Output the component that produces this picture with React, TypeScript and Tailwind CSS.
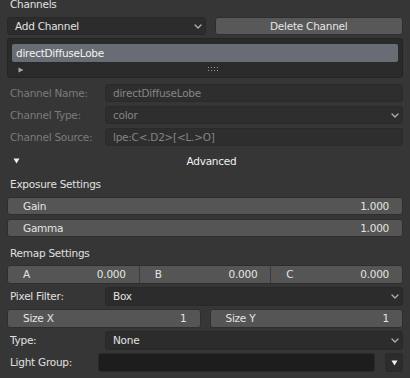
import React from "react";

const Chevron = () => (
  <svg width="8" height="5" viewBox="0 0 8 5" className="shrink-0">
    <path d="M1 1l3 3 3-3" fill="none" stroke="#b0b0b0" strokeWidth="1.3" strokeLinecap="round" strokeLinejoin="round" />
  </svg>
);

const DownTri = ({ color = "#f0f0f0" }: { color?: string }) => (
  <svg width="7" height="6" viewBox="0 0 7 6" className="shrink-0">
    <path d="M0.5 0.5h6L3.5 5.5z" fill={color} />
  </svg>
);

function Dropdown({ text, className = "" }: { text: string; className?: string }) {
  return (
    <div className={`flex items-center justify-between rounded-[3px] bg-[#2c2c2c] border border-[#282828] pl-[7px] pr-[3px] text-[#e2e2e2] ${className}`}>
      <span>{text}</span>
      <Chevron />
    </div>
  );
}

function Slider({ label, value, className = "" }: { label: string; value: string; className?: string }) {
  return (
    <div className={`flex items-center justify-between rounded-[3px] bg-[#555555] border border-[#2e2e2e] pl-[15px] pr-[13px] text-[#e4e4e4] ${className}`}>
      <span>{label}</span>
      <span>{value}</span>
    </div>
  );
}

function DisabledRow({ label, value, menu }: { label: string; value: string; menu?: boolean }) {
  return (
    <div className="flex h-[18px] items-center">
      <span className="w-[98px] shrink-0 pl-[3px] text-[#7b7b7b]">{label}</span>
      <div className="flex h-full flex-1 items-center justify-between rounded-[3px] bg-[#2e2e2e] border border-[#2a2a2a] pl-[7px] pr-[3px] text-[#858585]">
        <span>{value}</span>
        {menu && <Chevron />}
      </div>
    </div>
  );
}

function LabeledDropdown({ label, value }: { label: string; value: string }) {
  return (
    <div className="flex h-[19px] items-center">
      <span className="w-[98px] shrink-0 pl-[3px] text-[#e0e0e0]">{label}</span>
      <Dropdown text={value} className="h-full flex-1" />
    </div>
  );
}

export default function App() {
  return (
    <div className="flex h-[378px] w-[410px] flex-col overflow-hidden bg-[#363636] px-[7px] font-['DejaVu_Sans',sans-serif] text-[10.5px] leading-none tracking-[-0.25px]">
      {/* Channels header */}
      <div className="-mt-[3px] flex h-[14px] items-center pl-[3px] text-[#e0e0e0]">Channels</div>

      <div className="mt-[6px] flex h-[18px] gap-[9px]">
        <Dropdown text="Add Channel" className="flex-1" />
        <div className="flex flex-1 items-center justify-center rounded-[3px] bg-[#585858] border border-[#2e2e2e] text-[#e6e6e6]">
          Delete Channel
        </div>
      </div>

      {/* Channel list */}
      <div className="mt-[3px] flex h-[40px] flex-col rounded-[3px] border border-[#242424] bg-[#2a2a2a] px-[4px] pt-[5px]">
        <div className="flex h-[18px] items-center rounded-[2px] bg-[#686d75] pl-[4px] text-[#f2f2f2]">directDiffuseLobe</div>
        <div className="relative flex flex-1 items-center">
          <svg width="6" height="6" viewBox="0 0 6 6" className="ml-[6px]">
            <path d="M0.5 0.5L5.5 3L0.5 5.5z" fill="#a8a8a8" />
          </svg>
          <svg width="12" height="4" viewBox="0 0 12 4" className="absolute left-[196px] top-[5px]">
            {[0, 3, 6, 9].map((x) => (
              <g key={x} fill="#9a9a9a">
                <rect x={x} y={0} width="1" height="1" />
                <rect x={x} y={3} width="1" height="1" />
              </g>
            ))}
          </svg>
        </div>
      </div>

      <div className="mt-[6px] flex flex-col gap-[4px]">
        <DisabledRow label="Channel Name:" value="directDiffuseLobe" />
        <DisabledRow label="Channel Type:" value="color" menu />
        <DisabledRow label="Channel Source:" value="lpe:C<.D2>[<L.>O]" />
      </div>

      {/* Advanced */}
      <div className="mt-[6px] flex h-[18px] items-center pl-[6px] text-[#f0f0f0]">
        <DownTri />
        <span className="flex-1 text-center">Advanced</span>
      </div>

      <div className="mt-[5px] flex h-[18px] items-center pl-[3px] text-[#e0e0e0]">Exposure Settings</div>
      <Slider label="Gain" value="1.000" className="mt-[4px] h-[18px]" />
      <Slider label="Gamma" value="1.000" className="mt-[4px] h-[18px]" />

      <div className="mt-[7px] flex h-[18px] items-center pl-[3px] text-[#e0e0e0]">Remap Settings</div>
      <div className="mt-[3px] flex h-[19px] rounded-[3px] border border-[#2e2e2e] bg-[#555555] text-[#e4e4e4]">
        {["A", "B", "C"].map((k, i) => (
          <div
            key={k}
            className={`flex flex-1 items-center justify-between pl-[15px] pr-[13px] ${i > 0 ? "border-l border-[#3c3c3c]" : ""}`}
          >
            <span>{k}</span>
            <span>0.000</span>
          </div>
        ))}
      </div>

      <div className="mt-[3px]">
        <LabeledDropdown label="Pixel Filter:" value="Box" />
      </div>

      <div className="mt-[3px] flex h-[19px] gap-[9px]">
        <Slider label="Size X" value="1" className="flex-1" />
        <Slider label="Size Y" value="1" className="flex-1" />
      </div>

      <div className="mt-[3px]">
        <LabeledDropdown label="Type:" value="None" />
      </div>

      <div className="mt-[3px] flex h-[19px] items-center">
        <span className="w-[91px] shrink-0 pl-[3px] text-[#e0e0e0]">Light Group:</span>
        <div className="h-full flex-1 rounded-[3px] border border-[#2a2a2a] bg-[#1d1d1d]" />
        <div className="ml-[10px] flex h-full w-[18px] items-center justify-center rounded-[3px] border border-[#2a2a2a] bg-[#2c2c2c]">
          <DownTri />
        </div>
      </div>
    </div>
  );
}
